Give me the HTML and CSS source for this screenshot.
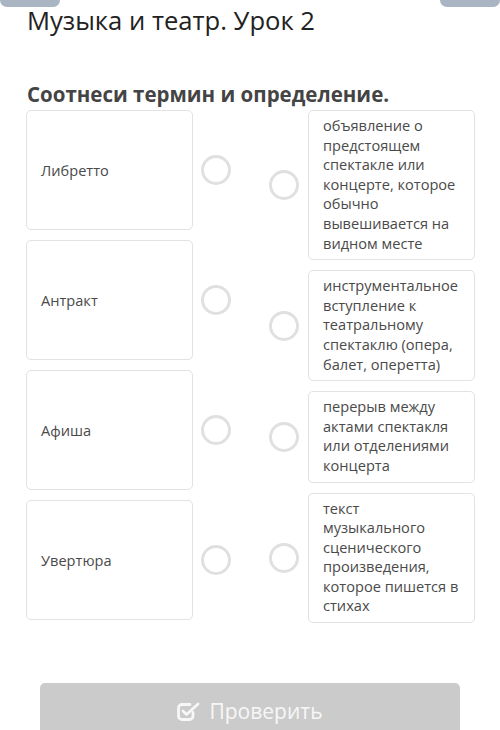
FILE: index.html
```html
<!DOCTYPE html>
<html lang="ru">

<head>
  <meta charset="UTF-8">
  <meta name="viewport" content="width=device-width, initial-scale=1.0">
  <title>Музыка и театр. Урок 2</title>
  <link rel="stylesheet" href="styles.css">
</head>

<body>
  <div class="topbar">
    <span class="tab"></span>
    <span class="tab"></span>
  </div>

  <div class="container">
    <h1>Музыка и театр. Урок 2</h1>
    <h2>Соотнеси термин и определение.</h2>

    <div class="match">
      <div class="column">
        <div class="row">
          <div class="card term">Либретто</div>
          <span class="dot"></span>
        </div>
        <div class="row">
          <div class="card term">Антракт</div>
          <span class="dot"></span>
        </div>
        <div class="row">
          <div class="card term">Афиша</div>
          <span class="dot"></span>
        </div>
        <div class="row">
          <div class="card term">Увертюра</div>
          <span class="dot"></span>
        </div>
      </div>

      <div class="column">
        <div class="row">
          <span class="dot"></span>
          <div class="card def">объявление о предстоящем спектакле или концерте, которое обычно вывешивается на видном месте</div>
        </div>
        <div class="row">
          <span class="dot"></span>
          <div class="card def">инструментальное вступление к театральному спектаклю (опера, балет, оперетта)</div>
        </div>
        <div class="row">
          <span class="dot"></span>
          <div class="card def">перерыв между актами спектакля или отделениями концерта</div>
        </div>
        <div class="row">
          <span class="dot"></span>
          <div class="card def">текст музыкального сценического произведения, которое пишется в стихах</div>
        </div>
      </div>
    </div>

    <button class="btn">
      <svg width="23" height="19" viewBox="0 0 23 19" fill="none" stroke="currentColor" stroke-width="2.8" stroke-linecap="round" stroke-linejoin="round">
        <path d="M16 10.5v3.5a3.5 3.5 0 0 1-3.5 3.5H5a3.5 3.5 0 0 1-3.5-3.5V6A3.5 3.5 0 0 1 5 2.5h8" />
        <path d="M6 9l3.5 3.5L21 2" />
      </svg>
      Проверить
    </button>
  </div>
</body>

</html>
```

FILE: styles.css
```css
body {
  font-family: "Open Sans", "Noto Sans", sans-serif;
  background-color: white;
  margin: 0;
  padding: 0;
  overflow: hidden;
}

.topbar {
  display: flex;
  justify-content: space-between;
}

.tab {
  width: 60px;
  height: 7px;
  background-color: #a9b5c2;
  border-radius: 0 0 7px 7px;
}

.container {
  padding: 0 25px 0 26px;
}

h1 {
  margin: -1px 0 0 1px;
  font-size: 25.6px;
  font-weight: normal;
  line-height: 30px;
  color: #222;
}

h2 {
  margin: 45px 0 3px 1px;
  font-size: 20.5px;
  font-weight: bold;
  line-height: 26px;
  color: #444;
}

.match {
  display: flex;
  justify-content: space-between;
}

.column {
  display: flex;
  flex-direction: column;
  gap: 10px;
}

.row {
  display: flex;
  align-items: center;
}

.card {
  width: 167px;
  box-sizing: border-box;
  border: 1px solid #e2e2e2;
  border-radius: 5px;
  background-color: white;
  color: #4a4a4a;
  font-size: 14.6px;
}

.term {
  height: 120px;
  display: flex;
  align-items: center;
  padding-left: 14px;
}

.def {
  padding: 5px 12px 6px 14px;
  line-height: 19.6px;
}

.dot {
  width: 30px;
  height: 30px;
  box-sizing: border-box;
  border: 3px solid #e0e0e0;
  border-radius: 50%;
}

.row .term + .dot {
  margin-left: 8px;
}

.row .dot + .def {
  margin-left: 9px;
}

.btn {
  display: flex;
  align-items: center;
  justify-content: center;
  gap: 9px;
  width: 420px;
  margin: 60px 0 0 14px;
  padding: 14px 0 12px;
  border: none;
  border-radius: 5px;
  background-color: #cbcbcb;
  color: #f7f7f7;
  font-family: "Open Sans", "Noto Sans", sans-serif;
  font-size: 21px;
}
```
